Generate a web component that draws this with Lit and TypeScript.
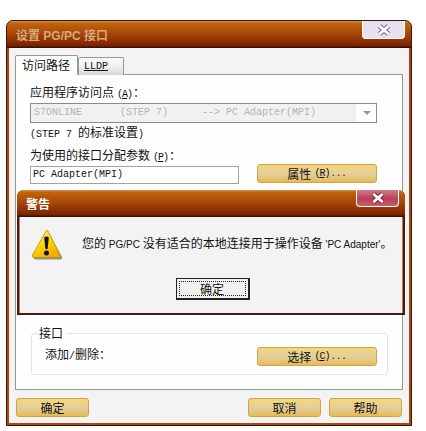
import { LitElement, css, html, svg } from 'lit';
import { customElement } from 'lit/decorators.js';

const closeIcon = (stroke: string) => html`<svg width="18" height="14" viewBox="0 0 18 14">
  ${svg`<path d="M4.5 3 L13.5 11 M13.5 3 L4.5 11" stroke=${stroke} stroke-width="5" fill="none" />
  <path d="M4.5 3 L13.5 11 M13.5 3 L4.5 11" stroke="#fff" stroke-width="3" fill="none" />`}
</svg>`;

const warningIcon = html`<svg class="warn" width="32" height="32" viewBox="0 0 32 32">
  <defs>
    <linearGradient id="wg" x1="0" y1="0" x2="0.5" y2="1">
      <stop offset="0" stop-color="#fff27a" />
      <stop offset="0.55" stop-color="#ffd800" />
      <stop offset="1" stop-color="#eeb000" />
    </linearGradient>
  </defs>
  <path d="M17 3 L31 28 Q31.5 30.5 29 30.5 L5 30.5 Q2 30.5 3 28 L15 3 Q16 1 17 3 Z" fill="#77745f" opacity="0.75" />
  <path d="M15 2 Q16 0.5 17 2 L29 26 Q30 28.5 27.5 28.5 L3 28.5 Q0.5 28.5 1.5 26 Z" fill="url(#wg)" stroke="#b98a10" stroke-width="0.8" />
  <path d="M13.2 8.5 Q15.5 6.5 17.8 8.5 L16.6 20 L14.4 20 Z" fill="#111" />
  <circle cx="15.5" cy="24" r="2.5" fill="#111" />
</svg>`;

const mnemonic = (key: string) => html`<span class="key">(<u>${key}</u>)</span>`;

@customElement('app-root')
export class AppRoot extends LitElement {
  static styles = css`
    :host {
      display: block;
      width: 426px;
      height: 431px;
      background: #fff;
      overflow: hidden;
      font: 12px/14px 'Noto Sans CJK SC', sans-serif;
      color: #111;
    }

    .page {
      padding: 20px 14px 5px 6px;
    }

    .window {
      position: relative;
      box-sizing: border-box;
      width: 406px;
      height: 406px;
      display: flex;
      flex-direction: column;
      background: #a8480a;
      border: 1px solid #3a1405;
      border-radius: 7px 7px 0 0;
      padding: 0 2px 2px;
    }

    .titlebar {
      flex: none;
      display: flex;
      align-items: flex-start;
      justify-content: space-between;
      box-sizing: border-box;
      margin: 0 -2px;
      height: 27px;
      padding: 0 6px 0 9px;
      background: linear-gradient(#d8955a 0, #c2640c 2px, #a8480a 12px, #7a2200 25px, #3c0f00 26px);
      border-radius: 6px 6px 0 0;
    }

    .titlebar h1 {
      margin: 8px 0 0;
      font: bold 12px/14px 'Liberation Sans', 'Noto Sans CJK SC', sans-serif;
      color: #d9a77c;
    }

    .close {
      width: 43px;
      height: 18px;
      display: flex;
      align-items: center;
      justify-content: center;
      box-sizing: border-box;
      background: #e7e0f0;
      border: 1px solid #fff;
      border-top: none;
      border-radius: 0 0 4px 4px;
    }

    .client {
      flex: 1;
      display: flex;
      flex-direction: column;
      background: #f3f3f3;
      padding: 7px 6px 6px;
    }

    .tabs {
      display: flex;
      align-items: flex-end;
      margin-bottom: -1px;
      position: relative;
    }

    .tab {
      box-sizing: border-box;
      border: 1px solid #8f9a9b;
      border-bottom: none;
      border-radius: 2px 2px 0 0;
      white-space: nowrap;
    }

    .tab.active {
      width: 63px;
      height: 20px;
      padding: 2px 6px;
      background: #fefefe;
    }

    .tab.other {
      width: 46px;
      height: 18px;
      padding: 2px 5px;
      font: 10px/14px 'Liberation Mono', monospace;
      background: linear-gradient(#fafafa, #f0f0f0 50%, #d6d6d6);
    }

    .tab.other span {
      text-decoration: underline;
    }

    .panel {
      box-sizing: border-box;
      height: 316px;
      background: #fefefe;
      border: 1px solid #8f9a9b;
      padding: 10px 25px 0 14px;
    }

    .label,
    .note {
      height: 14px;
      white-space: nowrap;
    }

    .key {
      font: 10px/14px 'Liberation Mono', monospace;
      letter-spacing: -1px;
      margin: 0 1px 0 3px;
    }

    .lat {
      font: 10px/14px 'Liberation Mono', monospace;
    }

    .dots {
      font: 9px/14px 'Liberation Mono', monospace;
    }

    .combo {
      box-sizing: border-box;
      height: 20px;
      margin-top: 4px;
      display: flex;
      align-items: center;
      justify-content: space-between;
      background: #fff;
      border: 1px solid #8b8b8b;
      padding-right: 5px;
    }

    .combo pre {
      margin: 0 7px 0 0;
      flex: 1;
      padding: 0 3px;
      height: 18px;
      background: #f1f1f1;
      font: 10px/18px 'Liberation Mono', monospace;
      color: #b3b3b3;
    }

    .combo .shift {
      margin: 0 -2px 0 2px;
    }

    .arrow {
      width: 0;
      height: 0;
      border: 4px solid transparent;
      border-top: 4px solid #999;
      border-bottom: none;
    }

    .note {
      margin-top: 2px;
    }

    .assign {
      margin-top: 9px;
    }

    .field-row {
      display: flex;
      justify-content: space-between;
      margin-top: 2px;
    }

    .field {
      box-sizing: border-box;
      width: 209px;
      height: 18px;
      margin-top: 2px;
      border: 1px solid #a3a3a3;
      padding: 0 2px;
      font: 10px/16px 'Liberation Mono', monospace;
      background: #fff;
    }

    .btn {
      box-sizing: border-box;
      width: 120px;
      height: 19px;
      display: flex;
      align-items: center;
      justify-content: center;
      border: 1px solid #d2a445;
      border-radius: 3px;
      background: linear-gradient(#f4d678, #e5d09a 45%, #e3cb8e 65%, #e8ba50);
      white-space: pre;
    }

    .btn.small {
      width: 73px;
    }

    .group {
      position: relative;
      box-sizing: border-box;
      height: 42px;
      margin: 149px -11px 0 1px;
      border: 1px solid #e4e4e4;
      border-radius: 3px;
      padding: 13px 0 0 13px;
      display: flex;
      justify-content: space-between;
    }

    .group .legend {
      position: absolute;
      top: -8px;
      left: 6px;
      background: #fefefe;
      padding: 0 4px 0 1px;
    }

    .group .btn {
      margin-right: 10px;
    }

    .actions {
      display: flex;
      align-items: flex-start;
      margin: 8px 1px 0;
      gap: 8px;
    }

    .actions .spacer {
      flex: 1;
    }

    .alert {
      position: absolute;
      left: 10px;
      top: 169px;
      box-sizing: border-box;
      width: 388px;
      height: 125px;
      display: flex;
      flex-direction: column;
      background: #f3f3f3;
      border: 2px solid #4a1a0e;
      border-top: none;
      border-radius: 7px 7px 0 0;
    }

    .alert .titlebar h1 {
      color: #fff;
    }

    .alert .close {
      width: 43px;
      height: 17px;
      background: linear-gradient(#cf7c8c, #b84058 55%, #c95a6c);
    }

    .alert-body {
      flex: 1;
      display: flex;
      flex-direction: column;
      border-left: 1px solid #b57a5f;
      border-right: 1px solid #b57a5f;
    }

    .message {
      display: flex;
      padding: 12px 0 0 11px;
    }

    .warn {
      flex: none;
    }

    .message p {
      margin: 8px 0 0 19px;
      font: 10px/14px 'Liberation Sans', 'Noto Sans CJK SC', sans-serif;
      white-space: nowrap;
    }

    .message p b {
      font-weight: 400;
      font-size: 12px;
    }

    .ok {
      align-self: center;
      box-sizing: border-box;
      width: 74px;
      height: 22px;
      margin-top: 17px;
      margin-left: 3px;
      display: flex;
      align-items: center;
      justify-content: center;
      background: #f1f1f1;
      border: 1px solid #222;
      border-right: 2px solid #222;
      border-bottom: 2px solid #222;
      position: relative;
    }

    .ok::after {
      content: '';
      position: absolute;
      inset: 2px;
      border: 1px dotted #222;
    }
  `;

  render() {
    return html`<div class="page">
      <div class="window">
        <div class="titlebar">
          <h1>设置 PG/PC 接口</h1>
          <div class="close">${closeIcon('#6f6b90')}</div>
        </div>
        <div class="client">
          <div class="tabs">
            <div class="tab active">访问路径</div>
            <div class="tab other"><span>LLDP</span></div>
          </div>
          <div class="panel">
            <div class="label">应用程序访问点${mnemonic('A')}：</div>
            <div class="combo">
              <pre>S7ONLINE      <span class="shift">(STEP 7)</span>      --> PC Adapter(MPI)</pre>
              <div class="arrow"></div>
            </div>
            <div class="note"><span class="lat">(STEP 7 </span>的标准设置<span class="lat">)</span></div>
            <div class="label assign">为使用的接口分配参数${mnemonic('P')}：</div>
            <div class="field-row">
              <div class="field">PC Adapter(MPI)</div>
              <div class="btn">属性${mnemonic('R')}<span class="dots">...</span></div>
            </div>
            <div class="group">
              <span class="legend">接口</span>
              <span>添加<span class="lat">/</span>删除：</span>
              <div class="btn">选择${mnemonic('C')}<span class="dots">...</span></div>
            </div>
          </div>
          <div class="actions">
            <div class="btn small">确定</div>
            <div class="spacer"></div>
            <div class="btn small">取消</div>
            <div class="btn small">帮助</div>
          </div>
        </div>

        <div class="alert">
          <div class="titlebar">
            <h1>警告</h1>
            <div class="close">${closeIcon('#7a2036')}</div>
          </div>
          <div class="alert-body">
            <div class="message">
              ${warningIcon}
              <p><b>您的</b> PG/PC <b>没有适合的本地连接用于操作设备</b> 'PC Adapter'<b>。</b></p>
            </div>
            <div class="ok">确定</div>
          </div>
        </div>
      </div>
    </div>`;
  }
}
